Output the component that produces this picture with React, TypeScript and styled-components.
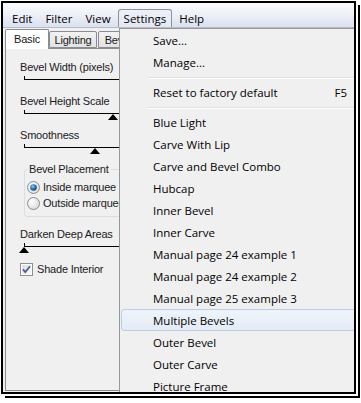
import React from "react";
import styled, { createGlobalStyle } from "styled-components";

const Global = createGlobalStyle`
  html, body { margin: 0; padding: 0; background: #ffffff; }
  body { width: 361px; height: 403px; overflow: hidden; }
`;

const Frame = styled.div`
  position: relative;
  margin: 1px 0 0 1px;
  width: 351px;
  height: 389px;
  border: 2px solid #000;
  box-shadow: 2px 2px 0 #fff, 4px 4px 0 #000;
  background: #f0f0f0;
  overflow: hidden;
  display: flex;
  flex-direction: column;
`;

const MenuBar = styled.div`
  height: 24px;
  border-bottom: 1px solid #b6bbc6;
  background: linear-gradient(#fdfdff, #eef1f8 45%, #dbe1f0);
  display: flex;
  align-items: flex-end;
  gap: 1px;
  padding-left: 3px;
  font-family: "Open Sans", sans-serif;
  font-size: 11.5px;
  color: #000;
`;

const BarItem = styled.div<{ $open?: boolean }>`
  box-sizing: border-box;
  height: 18px;
  padding: 0 5px;
  display: flex;
  align-items: center;
  border: 1px solid ${(p) => (p.$open ? "#8d929c" : "transparent")};
  border-bottom: none;
  border-radius: 3px 3px 0 0;
  background: ${(p) =>
    p.$open ? "linear-gradient(#eef1f7, #e3e8f1)" : "transparent"};
  white-space: nowrap;
`;

const Body = styled.div`
  flex: 1;
  display: flex;
  flex-direction: column;
  padding: 1px 0 1px 2px;
  font-family: "Liberation Sans", Arial, sans-serif;
  font-size: 11px;
  letter-spacing: -0.2px;
  color: #1a1a1a;
`;

const TabStrip = styled.div`
  display: flex;
  align-items: flex-end;
  height: 19px;
  position: relative;
  z-index: 1;
`;

const Tab = styled.div<{ $active?: boolean; $w: number }>`
  box-sizing: border-box;
  width: ${(p) => p.$w}px;
  height: ${(p) => (p.$active ? 20 : 17)}px;
  margin-bottom: ${(p) => (p.$active ? -1 : 0)}px;
  margin-right: ${(p) => (p.$active ? 0 : 1)}px;
  border: 1px solid #898c95;
  border-bottom: ${(p) => (p.$active ? "none" : "1px solid #898c95")};
  border-radius: 2px 2px 0 0;
  background: ${(p) =>
    p.$active ? "#ffffff" : "linear-gradient(#f2f2f2, #e3e3e3)"};
  display: flex;
  align-items: center;
  justify-content: center;
  padding-bottom: ${(p) => (p.$active ? 1 : 0)}px;
  white-space: nowrap;
  overflow: hidden;
`;

const TabPanel = styled.div`
  flex: 1;
  border: 1px solid #898c95;
  background: #f0f0f0;
  padding: 11px 0 0 14px;
  display: flex;
  flex-direction: column;
`;

const Field = styled.div<{ $mt: number }>`
  margin-top: ${(p) => p.$mt}px;
`;

const Label = styled.div`
  height: 14px;
  line-height: 14px;
  white-space: nowrap;
`;

const SliderBox = styled.div`
  position: relative;
  box-sizing: border-box;
  margin-left: 4px;
  width: 130px;
  height: 14px;
  padding-top: 5px;
`;

const Track = styled.div`
  height: 0;
  border-top: 1px solid #000;
  position: relative;
  &::before {
    content: "";
    position: absolute;
    left: 0;
    top: -4px;
    width: 1px;
    height: 4px;
    background: #000;
  }
`;

const Thumb = styled.div<{ $x: number }>`
  position: absolute;
  top: 6px;
  left: ${(p) => p.$x - 5}px;
  width: 0;
  height: 0;
  border-left: 5px solid transparent;
  border-right: 5px solid transparent;
  border-bottom: 6px solid #000;
`;

const Group = styled.fieldset`
  margin: 0 0 0 4px;
  padding: 3px 0 5px 2px;
  width: 140px;
  border: 1px solid #d5dfe5;
  border-radius: 3px;
  min-inline-size: 0;
`;

const Legend = styled.legend`
  padding: 0 2px;
  margin-left: 0;
  line-height: 14px;
  height: 14px;
  white-space: nowrap;
`;

const OptionRow = styled.div`
  height: 16px;
  display: flex;
  align-items: center;
  gap: 3px;
  white-space: nowrap;
`;

const CheckRow = styled.div<{ $mt: number }>`
  margin-top: ${(p) => p.$mt}px;
  height: 14px;
  display: flex;
  align-items: center;
  gap: 4px;
  white-space: nowrap;
`;

const Dropdown = styled.div`
  position: absolute;
  top: 25px;
  left: 116px;
  width: 250px;
  height: 400px;
  box-sizing: border-box;
  border: 1px solid #979797;
  background: #f0f0f0;
  padding: 0 1px;
  font-family: "Open Sans", sans-serif;
  font-size: 11.5px;
  color: #000;
  z-index: 2;
`;

const MenuItem = styled.div<{ $hot?: boolean }>`
  box-sizing: border-box;
  height: 22px;
  padding: 0 19px 0 31px;
  display: flex;
  align-items: center;
  justify-content: space-between;
  border: 1px solid ${(p) => (p.$hot ? "#b9cde4" : "transparent")};
  border-radius: 3px;
  background: ${(p) =>
    p.$hot ? "linear-gradient(#f0f4fa, #e3ebf6)" : "transparent"};
  white-space: nowrap;
`;

const Separator = styled.div`
  margin: 4px 0 2px 27px;
  border-top: 1px solid #e0e0e0;
  border-bottom: 1px solid #ffffff;
`;

function Radio({ on }: { on?: boolean }) {
  return (
    <svg width="13" height="13" viewBox="0 0 13 13">
      <defs>
        <radialGradient id="rf" cx="0.35" cy="0.35" r="0.8">
          <stop offset="0" stopColor="#ffffff" />
          <stop offset="1" stopColor="#d6d6d6" />
        </radialGradient>
        <radialGradient id="rd" cx="0.4" cy="0.35" r="0.7">
          <stop offset="0" stopColor="#8ed0f3" />
          <stop offset="0.5" stopColor="#2a7ab8" />
          <stop offset="1" stopColor="#0b3f71" />
        </radialGradient>
      </defs>
      <circle cx="6.5" cy="6.5" r="6" fill="url(#rf)" stroke="#8b8b8b" />
      {on && <circle cx="6.5" cy="6.5" r="3.3" fill="url(#rd)" />}
    </svg>
  );
}

function CheckBox() {
  return (
    <svg width="13" height="13" viewBox="0 0 13 13">
      <defs>
        <linearGradient id="cb" x1="0" y1="0" x2="1" y2="1">
          <stop offset="0" stopColor="#dcdcdc" />
          <stop offset="1" stopColor="#fbfbfb" />
        </linearGradient>
      </defs>
      <rect x="0.5" y="0.5" width="12" height="12" fill="#fff" stroke="#8e8f8f" />
      <rect x="2" y="2" width="9" height="9" fill="url(#cb)" />
      <path d="M3 6.3 L5.3 9 L10 3.2" fill="none" stroke="#4a5f97" strokeWidth="1.8" />
    </svg>
  );
}

function Slider({ thumb }: { thumb?: number }) {
  return (
    <SliderBox>
      <Track />
      {thumb !== undefined && <Thumb $x={thumb} />}
    </SliderBox>
  );
}

const presets = [
  "Blue Light",
  "Carve With Lip",
  "Carve and Bevel Combo",
  "Hubcap",
  "Inner Bevel",
  "Inner Carve",
  "Manual page 24 example 1",
  "Manual page 24 example 2",
  "Manual page 25 example 3",
  "Multiple Bevels",
  "Outer Bevel",
  "Outer Carve",
  "Picture Frame",
];

export default function App() {
  return (
    <>
      <Global />
      <Frame>
        <MenuBar>
          <BarItem>Edit</BarItem>
          <BarItem>Filter</BarItem>
          <BarItem>View</BarItem>
          <BarItem $open>Settings</BarItem>
          <BarItem>Help</BarItem>
        </MenuBar>
        <Body>
          <TabStrip>
            <Tab $active $w={44}>Basic</Tab>
            <Tab $w={48}>Lighting</Tab>
            <Tab $w={40}>Bevel</Tab>
          </TabStrip>
          <TabPanel>
            <Field $mt={0}>
              <Label>Bevel Width (pixels)</Label>
              <Slider thumb={125} />
            </Field>
            <Field $mt={6}>
              <Label>Bevel Height Scale</Label>
              <Slider thumb={89} />
            </Field>
            <Field $mt={6}>
              <Label>Smoothness</Label>
              <Slider thumb={71} />
            </Field>
            <Field $mt={6}>
              <Group>
                <Legend>Bevel Placement</Legend>
                <OptionRow>
                  <Radio on />
                  <span>Inside marquee</span>
                </OptionRow>
                <OptionRow>
                  <Radio />
                  <span>Outside marquee</span>
                </OptionRow>
              </Group>
            </Field>
            <Field $mt={10}>
              <Label>Darken Deep Areas</Label>
              <Slider thumb={0} />
            </Field>
            <CheckRow $mt={7}>
              <CheckBox />
              <span>Shade Interior</span>
            </CheckRow>
          </TabPanel>
        </Body>
        <Dropdown>
          <MenuItem>Save...</MenuItem>
          <MenuItem>Manage...</MenuItem>
          <Separator />
          <MenuItem>
            <span>Reset to factory default</span>
            <span>F5</span>
          </MenuItem>
          <Separator />
          {presets.map((p) => (
            <MenuItem key={p} $hot={p === "Multiple Bevels"}>
              {p}
            </MenuItem>
          ))}
        </Dropdown>
      </Frame>
    </>
  );
}
